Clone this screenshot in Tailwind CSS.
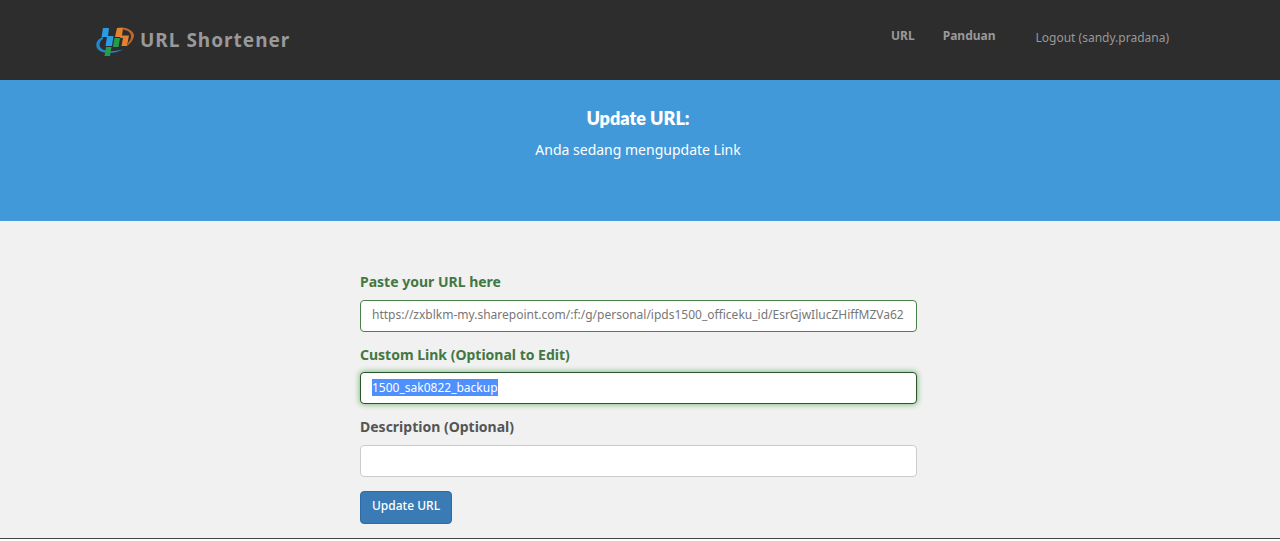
<!DOCTYPE html>
<html lang="id">
<head>
<meta charset="utf-8">
<meta name="viewport" content="width=device-width, initial-scale=1">
<title>URL Shortener</title>
<script src="https://cdn.jsdelivr.net/npm/@tailwindcss/browser@4"></script>
</head>
<body class="flex min-h-screen flex-col bg-white font-['Noto_Sans',sans-serif] text-xs text-[#555]">
<header class="flex h-20 items-center justify-between bg-[#2d2d2d] pr-[111px] pl-24 text-[#999]">
  <a href="#" class="flex items-center gap-1.5">
    <svg class="mt-1 h-8 w-[38px]" viewBox="0 0 38 32" aria-hidden="true">
      <path d="M7 11C1 13-1 18 1 22C4 28 18 29 28 23C19 26 8 26 5 22C2 19 4 15 7 13Z" fill="#2386c8"/>
      <path d="M21 2C29 0 37 4 38 9C38 13 35 17 31 20L32 17C35 14 36 10 34 7C32 4 27 3 21 3Z" fill="#b9682e"/>
      <path d="M7 2H13L12 10H17.500L16 20H9.500L11 11H5.500Z" fill="#2c9be6"/>
      <path d="M21 2H27L26 9.500H33L31 20H25.500L27 12H24.500L24 11H19Z" fill="#e5812f"/>
      <path d="M18.500 12H24L22.500 21H17ZM10 21H15.500L14 30H8.500Z" fill="#269c4b"/>
    </svg>
    <span class="mt-0.5 text-[19px] font-bold tracking-[1px]">URL Shortener</span>
  </a>
  <nav class="flex items-center">
    <a href="#" class="mr-7 mb-2 font-bold">URL</a>
    <a href="#" class="mr-10 mb-2 font-bold">Panduan</a>
    <button type="button" class="mb-1">Logout (sandy.pradana)</button>
  </nav>
</header>
<section class="h-[141px] bg-[#4199da] pt-6 pr-1 text-center text-white">
  <h1 class="font-['Lato',sans-serif] text-lg leading-7 font-extrabold">Update URL:</h1>
  <p class="mt-1 text-sm leading-7">Anda sedang mengupdate Link</p>
</section>
<main class="border-b border-[#444] bg-[#f1f1f1] pt-[49px] pr-[3px] pb-3.5">
  <form class="mx-auto max-w-[557px]">
    <label for="url" class="block pb-1.5 text-sm leading-6 font-bold text-[#437743]">Paste your URL here</label>
    <input id="url" type="text" value="https://zxblkm-my.sharepoint.com/:f:/g/personal/ipds1500_officeku_id/EsrGjwIlucZHiffMZVa62" class="block h-8 w-full rounded-sm border border-[#4a8149] bg-white px-[11px] pb-1 text-[#777] outline-none">
    <label for="custom" class="mt-[11px] block pb-[5px] text-sm leading-6 font-bold text-[#437743]">Custom Link (Optional to Edit)</label>
    <input id="custom" type="text" value="1500_sak0822_backup" autofocus class="block h-8 w-full rounded-sm border border-[#2b542c] bg-white px-[11px] pb-0.5 text-[#777] shadow-[0_0_6px_#67b168] outline-none selection:bg-[#4d90fe] selection:text-white">
    <label for="description" class="mt-[11px] block pb-1.5 text-sm leading-6 font-bold">Description (Optional)</label>
    <input id="description" type="text" class="block h-8 w-full rounded-sm border border-[#ccc] bg-white px-[11px] outline-none">
    <button type="submit" class="mt-3.5 block h-[33px] rounded-sm border border-[#2e6da4] bg-[#3a7ab5] px-[11px] pb-1 font-medium text-white">Update URL</button>
  </form>
</main>
<script>
  const customLink = document.getElementById('custom');
  customLink.focus();
  customLink.select();
</script>
</body>
</html>
